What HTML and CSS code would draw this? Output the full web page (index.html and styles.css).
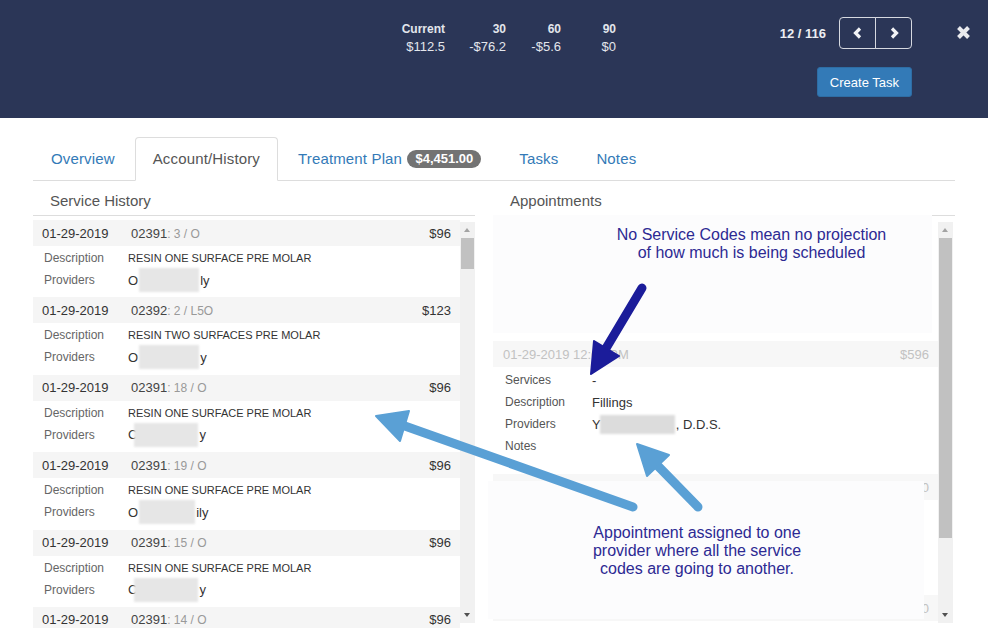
FILE: index.html
```html
<!DOCTYPE html>
<html lang="en">

<head>
    <meta charset="UTF-8">
    <meta name="viewport" content="width=device-width, initial-scale=1.0">
    <title>Patient Account</title>
    <link rel="stylesheet" href="styles.css">
</head>

<body>
    <div class="topbar">
        <div class="aging">
            <span class="aging__label">Current</span>
            <span class="aging__label">30</span>
            <span class="aging__label">60</span>
            <span class="aging__label">90</span>
            <span class="aging__value">$112.5</span>
            <span class="aging__value">-$76.2</span>
            <span class="aging__value">-$5.6</span>
            <span class="aging__value">$0</span>
        </div>
        <div class="actions">
            <div class="pager">
                <span class="pager__count">12 / 116</span>
                <button class="pager__btn">
                    <svg width="10" height="12" viewBox="0 0 10 12"><polyline points="7,1.5 2.5,6 7,10.5" /></svg>
                </button>
                <button class="pager__btn pager__btn--next">
                    <svg width="10" height="12" viewBox="0 0 10 12"><polyline points="3,1.5 7.5,6 3,10.5" /></svg>
                </button>
            </div>
            <button class="btn-primary">Create Task</button>
        </div>
        <button class="close">
            <svg width="15" height="15" viewBox="0 0 15 15"><path d="M2.5 2.5 L12.5 12.5 M12.5 2.5 L2.5 12.5" /></svg>
        </button>
    </div>

    <ul class="tabs">
        <li class="tab">Overview</li>
        <li class="tab tab--active">Account/History</li>
        <li class="tab">Treatment Plan <span class="badge">$4,451.00</span></li>
        <li class="tab">Tasks</li>
        <li class="tab">Notes</li>
    </ul>

    <div class="panels">
        <div class="panel panel--history">
            <div class="panel__title">Service History</div>
            <div class="panel__body">
                <div class="list">
                    <div class="service">
                        <div class="service__head">
                            <span class="service__date">01-29-2019</span>
                            <span class="service__code">02391<span class="service__tooth">: 3 / O</span></span>
                            <span class="service__fee">$96</span>
                        </div>
                        <div class="service__body">
                            <div class="row"><span class="row__label">Description</span><span class="row__desc">Resin one surface pre molar</span></div>
                            <div class="row"><span class="row__label">Providers</span><span class="row__value">O<span class="redact"></span>ly</span></div>
                        </div>
                    </div>
                    <div class="service">
                        <div class="service__head">
                            <span class="service__date">01-29-2019</span>
                            <span class="service__code">02392<span class="service__tooth">: 2 / L5O</span></span>
                            <span class="service__fee">$123</span>
                        </div>
                        <div class="service__body">
                            <div class="row"><span class="row__label">Description</span><span class="row__desc">Resin two surfaces pre molar</span></div>
                            <div class="row"><span class="row__label">Providers</span><span class="row__value">O<span class="redact"></span>y</span></div>
                        </div>
                    </div>
                    <div class="service">
                        <div class="service__head">
                            <span class="service__date">01-29-2019</span>
                            <span class="service__code">02391<span class="service__tooth">: 18 / O</span></span>
                            <span class="service__fee">$96</span>
                        </div>
                        <div class="service__body">
                            <div class="row"><span class="row__label">Description</span><span class="row__desc">Resin one surface pre molar</span></div>
                            <div class="row"><span class="row__label">Providers</span><span class="row__value">C<span class="redact redact--over"></span>y</span></div>
                        </div>
                    </div>
                    <div class="service">
                        <div class="service__head">
                            <span class="service__date">01-29-2019</span>
                            <span class="service__code">02391<span class="service__tooth">: 19 / O</span></span>
                            <span class="service__fee">$96</span>
                        </div>
                        <div class="service__body">
                            <div class="row"><span class="row__label">Description</span><span class="row__desc">Resin one surface pre molar</span></div>
                            <div class="row"><span class="row__label">Providers</span><span class="row__value">O<span class="redact redact--short"></span>ily</span></div>
                        </div>
                    </div>
                    <div class="service">
                        <div class="service__head">
                            <span class="service__date">01-29-2019</span>
                            <span class="service__code">02391<span class="service__tooth">: 15 / O</span></span>
                            <span class="service__fee">$96</span>
                        </div>
                        <div class="service__body">
                            <div class="row"><span class="row__label">Description</span><span class="row__desc">Resin one surface pre molar</span></div>
                            <div class="row"><span class="row__label">Providers</span><span class="row__value">C<span class="redact redact--over"></span>y</span></div>
                        </div>
                    </div>
                    <div class="service">
                        <div class="service__head">
                            <span class="service__date">01-29-2019</span>
                            <span class="service__code">02391<span class="service__tooth">: 14 / O</span></span>
                            <span class="service__fee">$96</span>
                        </div>
                    </div>
                </div>
                <div class="scrollbar">
                    <span class="scrollbar__up"></span>
                    <span class="scrollbar__thumb"></span>
                    <span class="scrollbar__down"></span>
                </div>
            </div>
        </div>

        <div class="panel panel--appointments">
            <div class="panel__title">Appointments</div>
            <div class="panel__body">
                <div class="list list--appointments">
                    <!-- earlier appointment, scrolled under the note -->
                    <div class="appt appt--hidden"></div>
                    <div class="appt">
                        <div class="appt__head">
                            <span class="appt__date">01-29-2019 12:00 PM</span>
                            <span class="appt__fee">$596</span>
                        </div>
                        <div class="appt__body">
                            <div class="row row--appt"><span class="row__label">Services</span><span class="row__value">-</span></div>
                            <div class="row row--appt"><span class="row__label">Description</span><span class="row__value">Fillings</span></div>
                            <div class="row row--appt"><span class="row__label">Providers</span><span class="row__value">Y<span class="redact redact--provider"></span>, D.D.S.</span></div>
                            <div class="row row--appt"><span class="row__label">Notes</span><span class="row__value"></span></div>
                        </div>
                    </div>
                    <div class="appt appt--short">
                        <div class="appt__head">
                            <span class="appt__date">02-12-2019 8:00 AM</span>
                            <span class="appt__fee">$310</span>
                        </div>
                    </div>
                    <div class="appt">
                        <div class="appt__head">
                            <span class="appt__date">02-26-2019 8:00 AM</span>
                            <span class="appt__fee">$310</span>
                        </div>
                    </div>
                </div>
                <div class="scrollbar">
                    <span class="scrollbar__up"></span>
                    <span class="scrollbar__thumb scrollbar__thumb--long"></span>
                    <span class="scrollbar__down"></span>
                </div>
            </div>
        </div>
    </div>

    <!-- annotations drawn over the screenshot -->
    <div class="note note--codes">No Service Codes mean no projection<br>of how much is being scheduled</div>
    <div class="note note--provider">Appointment assigned to one<br>provider where all the service<br>codes are going to another.</div>

    <svg class="arrows" width="988" height="639" viewBox="0 0 988 639">
        <g class="arrow arrow--dark">
            <line x1="642" y1="288" x2="605" y2="350" />
            <polygon points="591,374 594,341 619,356" />
        </g>
        <g class="arrow arrow--light">
            <line x1="633" y1="507" x2="402" y2="425" />
            <polygon points="376,416 409,411 400,441" />
        </g>
        <g class="arrow arrow--light">
            <line x1="698" y1="507" x2="657" y2="465" />
            <polygon points="637,444 647,476 669,455" />
        </g>
    </svg>
</body>

</html>
```

FILE: styles.css
```css
:root {
    --color-navy: #2b3657;
    --color-primary: #337ab7;
    --color-border: #ddd;
    --color-text: #333;
    --color-muted: #555;
    --color-row: #f5f5f5;
    --color-note: #2d2a93;
    --color-arrow-dark: #1b1c9a;
    --color-arrow-light: #5aa0d5;
}

body {
    margin: 0;
    position: relative;
    width: 988px;
    height: 639px;
    overflow: hidden;
    background-color: #fff;
    font-family: 'Liberation Sans', Arial, sans-serif;
    color: var(--color-text);
}

button {
    font-family: inherit;
    cursor: pointer;
}

/* top bar */

.topbar {
    display: flex;
    align-items: flex-start;
    height: 118px;
    box-sizing: border-box;
    padding-left: 390px;
    background-color: var(--color-navy);
    color: #e3e6ec;
}

.aging {
    display: grid;
    grid-template-columns: 55px 61px 55px 55px;
    margin-top: 21px;
    font-size: 12px;
    line-height: 17px;
    text-align: right;
}

.aging__label {
    font-weight: bold;
}

.aging__value {
    font-size: 13px;
}

.actions {
    display: flex;
    flex-direction: column;
    align-items: flex-end;
    gap: 18px;
    margin-left: auto;
    margin-top: 17px;
}

.pager {
    display: flex;
    align-items: center;
}

.pager__count {
    margin-right: 13px;
    font-size: 13px;
    font-weight: bold;
    color: #eceef2;
}

.pager__btn {
    display: flex;
    align-items: center;
    justify-content: center;
    width: 37px;
    height: 32px;
    padding: 0;
    background: transparent;
    border: 1px solid #d6d9e0;
    border-radius: 4px 0 0 4px;
}

.pager__btn--next {
    margin-left: -1px;
    border-radius: 0 4px 4px 0;
}

.pager__btn polyline {
    fill: none;
    stroke: #f2f3f6;
    stroke-width: 3.2;
}

.btn-primary {
    height: 30px;
    padding: 0 12px;
    background-color: var(--color-primary);
    border: 1px solid #2e6da4;
    border-radius: 3px;
    color: #fff;
    font-size: 13px;
}

.close {
    margin: 25px 17px 0 44px;
    padding: 0;
    width: 15px;
    height: 15px;
    background: none;
    border: none;
}

.close path {
    stroke: #e9eaee;
    stroke-width: 4;
}

/* tabs */

.tabs {
    display: flex;
    margin: 19px 33px 0;
    padding: 0;
    list-style: none;
    border-bottom: 1px solid var(--color-border);
}

.tab {
    margin-right: 2px;
    margin-bottom: -1px;
    padding: 11px 17px;
    border: 1px solid transparent;
    border-radius: 4px 4px 0 0;
    font-size: 15px;
    letter-spacing: 0.15px;
    line-height: 20px;
    color: var(--color-primary);
}

.tab--active {
    color: var(--color-muted);
    background-color: #fff;
    border-color: var(--color-border);
    border-bottom-color: transparent;
}

.badge {
    display: inline-block;
    margin-left: 1px;
    padding: 2px 8px;
    border-radius: 10px;
    background-color: #737373;
    color: #fff;
    font-size: 13px;
    font-weight: bold;
    letter-spacing: 0;
    line-height: 14px;
    vertical-align: 1px;
}

/* panels */

.panels {
    display: flex;
    gap: 18px;
    margin: 0 33px;
}

.panel--history {
    width: 442px;
}

.panel--appointments {
    flex: 1;
}

.panel__title {
    padding: 10px 17px 4px;
    font-size: 15px;
    line-height: 20px;
    color: var(--color-muted);
    border-bottom: 1px solid var(--color-border);
}

.panel__body {
    display: flex;
    height: 412px;
}

.panel--appointments .panel__body {
    padding-right: 2px;
}

.list {
    flex: 1;
    overflow: hidden;
    padding-top: 4px;
}

.list--appointments {
    padding-top: 0;
}

/* fake scrollbar */

.scrollbar {
    display: flex;
    flex-direction: column;
    width: 15px;
    margin: 6px 0 5px;
    background-color: #f1f1f1;
}

.scrollbar__up,
.scrollbar__down {
    height: 16px;
    position: relative;
}

.scrollbar__up::after,
.scrollbar__down::after {
    content: '';
    position: absolute;
    left: 4px;
    top: 6px;
    border-left: 3.5px solid transparent;
    border-right: 3.5px solid transparent;
}

.scrollbar__up::after {
    border-bottom: 4px solid #a3a3a3;
}

.scrollbar__down {
    margin-top: auto;
}

.scrollbar__down::after {
    border-top: 4px solid #505050;
}

.scrollbar__thumb {
    height: 31px;
    margin: 0 1px;
    background-color: #c1c1c1;
}

.scrollbar__thumb--long {
    height: 300px;
}

/* service history */

.service__head {
    display: flex;
    align-items: center;
    height: 26px;
    padding: 0 9px;
    background-color: var(--color-row);
    font-size: 13px;
}

.service__date {
    width: 89px;
}

.service__code {
    flex: 1;
    color: #444;
}

.service__tooth {
    font-size: 12px;
    color: #999;
}

.service__body {
    padding: 1px 0 6.4px;
}

.row {
    display: flex;
    align-items: center;
    height: 22px;
    padding-left: 11px;
}

.row__label {
    width: 84px;
    flex-shrink: 0;
    font-size: 12px;
    color: #666;
}

.row__desc {
    font-size: 11px;
    text-transform: uppercase;
}

.row__value {
    display: flex;
    align-items: center;
    font-size: 13px;
}

.redact {
    display: inline-block;
    width: 60px;
    height: 24px;
    margin: 0 1px;
    background-color: #e6e6e6;
    filter: blur(1px);
}

.redact--over {
    margin-left: -3px;
    width: 64px;
}

.redact--short {
    width: 56px;
}

.redact--provider {
    width: 75px;
    height: 19px;
    margin-left: -1px;
    background-color: #dcdcdc;
}

/* appointments */

.appt--hidden {
    height: 125px;
}

.appt--short {
    height: 121px;
}

.appt__head {
    display: flex;
    align-items: center;
    justify-content: space-between;
    height: 26px;
    padding: 0 9px 0 10px;
    background-color: #f7f7f7;
    font-size: 13px;
    color: #c2c2c2;
}

.appt__body {
    padding: 2px 0 17px;
}

.row--appt {
    padding-left: 12px;
}

.row--appt .row__label {
    width: 87px;
    color: #555;
}

/* annotations */

.note {
    position: absolute;
    box-sizing: border-box;
    background-color: #fcfcfd;
    color: var(--color-note);
    font-size: 16px;
    line-height: 18px;
    text-align: center;
}

.note--codes {
    left: 493px;
    top: 215px;
    width: 439px;
    height: 118px;
    padding: 11px 0 0 78px;
}

.note--provider {
    left: 488px;
    top: 481px;
    width: 436px;
    height: 138px;
    padding: 43px 18px 0 0;
}

.arrows {
    position: absolute;
    left: 0;
    top: 0;
    pointer-events: none;
}

.arrow line {
    stroke-width: 9;
    stroke-linecap: round;
}

.arrow polygon {
    stroke-width: 2;
    stroke-linejoin: round;
}

.arrow--dark line,
.arrow--dark polygon {
    stroke: var(--color-arrow-dark);
    fill: var(--color-arrow-dark);
}

.arrow--light line,
.arrow--light polygon {
    stroke: var(--color-arrow-light);
    fill: var(--color-arrow-light);
}
```
